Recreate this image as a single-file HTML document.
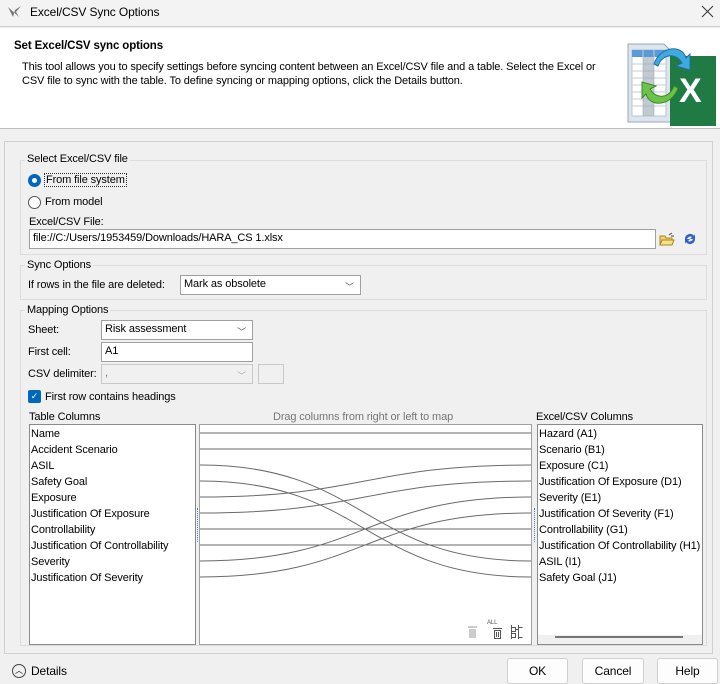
<!DOCTYPE html>
<html><head><style>
*{box-sizing:border-box;margin:0;padding:0}
body{width:720px;height:684px;background:#f0f0f0;font-family:"Liberation Sans",sans-serif;font-size:11px;letter-spacing:-0.12px;color:#000;position:relative;overflow:hidden}
.a{position:absolute;white-space:nowrap}
.box{position:absolute;border:1px solid #dcdcdc}
.in{position:absolute;background:#fff;border:1px solid #a0a0a0;padding-left:3px;line-height:17px}
.chev{position:absolute;right:6px;top:3px;font-size:9px;color:#555}
.btn{position:absolute;border:1px solid #cfcfcf;background:#fdfdfd;border-radius:3px;text-align:center;line-height:25px;font-size:12px}
.list{position:absolute;background:#fff;border:1px solid #8a8a8a}
.list div{height:16px;line-height:16px;padding-left:1px;white-space:nowrap}
</style></head><body>
<!-- title bar -->
<div class="a" style="left:0;top:0;width:720px;height:27px;background:#f3f3f3;border-bottom:1px solid #cfcfcf"></div>
<svg class="a" style="left:7px;top:5px" width="16" height="14"><path d="M1 2 L6 12 L8 5 L14 1 L9 7 L12 12 Z" fill="#777"/></svg>
<div class="a" style="left:30px;top:5px;font-size:12px">Excel/CSV Sync Options</div>
<svg class="a" style="left:701px;top:5px" width="13" height="13"><path d="M1 1L12 12M12 1L1 12" stroke="#333" stroke-width="1"/></svg>
<!-- header -->
<div class="a" style="left:0;top:28px;width:720px;height:101px;background:#fff;border-bottom:1px solid #bdbdbd"></div>
<div class="a" style="left:14px;top:40px;font-weight:bold;font-size:11.5px">Set Excel/CSV sync options</div>
<div class="a" style="left:22px;top:60px;line-height:14px">This tool allows you to specify settings before syncing content between an Excel/CSV file and a table. Select the Excel or<br>CSV file to sync with the table. To define syncing or mapping options, click the Details button.</div>
<svg class="a" style="left:626px;top:36px" width="92" height="92">
<path d="M2 8 H38 L46 16 V86 H2 Z" fill="#dce4ee" stroke="#9aa7b6"/>
<rect x="6" y="14" width="34" height="66" fill="#fff" stroke="#b8c4d2"/>
<rect x="6" y="14" width="34" height="7" fill="#5a9ad6"/>
<path d="M6 28H40M6 35H40M6 42H40M6 49H40M6 56H40M6 63H40M6 70H40M17 14V80M28 14V80" stroke="#c5ced9"/>
<rect x="17" y="21" width="11" height="59" fill="#9aa6b2" opacity=".6"/>
<rect x="44" y="20" width="46" height="70" fill="#1f7a44"/>
<text x="53" y="66" font-family="Liberation Sans" font-weight="bold" font-size="34" fill="#fff">X</text>
<path d="M28 28 C34 10 56 8 60 22 L64 18 L64 34 L50 30 L56 27 C50 16 36 18 32 30 Z" fill="#3fa9e0" stroke="#1e6fa6"/>
<path d="M52 52 C46 70 24 72 20 58 L16 62 L16 46 L30 50 L24 53 C30 64 44 62 48 50 Z" fill="#6cc24a" stroke="#3a8a22"/>
</svg>
<!-- outer panel -->
<div class="box" style="left:4px;top:141px;width:709px;height:513px;border-color:#cfcfcf"></div>
<!-- group 1 -->
<div class="box" style="left:20px;top:160px;width:687px;height:95px"></div>
<div class="a" style="left:25px;top:153px;background:#f0f0f0;padding:0 2px">Select Excel/CSV file</div>
<div class="a" style="left:28px;top:174px;width:13px;height:13px;border-radius:50%;background:#0067c0"><div style="position:absolute;left:4px;top:4px;width:5px;height:5px;border-radius:50%;background:#fff"></div></div>
<div class="a" style="left:44px;top:173px;border:1px dotted #333;padding:0 1px">From file system</div>
<div class="a" style="left:28px;top:196px;width:13px;height:13px;border-radius:50%;border:1px solid #555;background:#fff"></div>
<div class="a" style="left:45px;top:196px">From model</div>
<div class="a" style="left:29px;top:216px">Excel/CSV File:</div>
<div class="in" style="left:29px;top:229px;width:627px;height:20px">file://C:/Users/1953459/Downloads/HARA_CS 1.xlsx</div>
<svg class="a" style="left:659px;top:231px" width="16" height="16"><path d="M1 5 H6 L7 7 H13 V14 H1 Z" fill="#f3d36b" stroke="#a8861a"/><path d="M3 9 H15 L13 14 H1 Z" fill="#f7e08a" stroke="#a8861a"/><path d="M10 4 L13 2 M12 5 H15" stroke="#444"/></svg>
<svg class="a" style="left:682px;top:231px" width="16" height="16"><path d="M3 8 A5 5 0 0 1 12 5 L13 3 V8 H8 L10 6 A3.5 3.5 0 0 0 5 8 Z" fill="#2f63c7"/><path d="M13 8 A5 5 0 0 1 4 11 L3 13 V8 H8 L6 10 A3.5 3.5 0 0 0 11 8 Z" fill="#2f63c7"/></svg>
<!-- group 2 -->
<div class="box" style="left:20px;top:265px;width:687px;height:35px"></div>
<div class="a" style="left:25px;top:259px;background:#f0f0f0;padding:0 2px">Sync Options</div>
<div class="a" style="left:28px;top:279px">If rows in the file are deleted:</div>
<div class="in" style="left:180px;top:275px;width:181px;height:20px">Mark as obsolete<span class="chev">﹀</span></div>
<!-- group 3 -->
<div class="box" style="left:20px;top:310px;width:687px;height:336px"></div>
<div class="a" style="left:25px;top:304px;background:#f0f0f0;padding:0 2px">Mapping Options</div>
<div class="a" style="left:28px;top:324px">Sheet:</div>
<div class="in" style="left:101px;top:320px;width:152px;height:20px">Risk assessment<span class="chev">﹀</span></div>
<div class="a" style="left:28px;top:346px">First cell:</div>
<div class="in" style="left:101px;top:342px;width:152px;height:20px">A1</div>
<div class="a" style="left:28px;top:368px">CSV delimiter:</div>
<div class="in" style="left:101px;top:364px;width:152px;height:20px;background:#f0f0f0;border-color:#c8c8c8;color:#777">,<span class="chev" style="color:#aaa">﹀</span></div>
<div class="a" style="left:258px;top:364px;width:26px;height:20px;border:1px solid #c8c8c8"></div>
<div class="a" style="left:28px;top:390px;width:13px;height:13px;border-radius:2px;background:#0067c0;color:#fff;font-size:9px;line-height:13px;text-align:center">✓</div>
<div class="a" style="left:45px;top:391px">First row contains headings</div>
<div class="a" style="left:29px;top:411px">Table Columns</div>
<div class="a" style="left:273px;top:411px;color:#777">Drag columns from right or left to map</div>
<div class="a" style="left:536px;top:411px">Excel/CSV Columns</div>
<div class="list" style="left:29px;top:424px;width:167px;height:221px;padding-top:1px">
<div>Name</div><div>Accident Scenario</div><div>ASIL</div><div>Safety Goal</div><div>Exposure</div><div>Justification Of Exposure</div><div>Controllability</div><div>Justification Of Controllability</div><div>Severity</div><div>Justification Of Severity</div></div>
<div class="list" style="left:199px;top:424px;width:333px;height:221px;border-color:#a0a0a0"></div>
<svg class="a" style="left:199px;top:424px" width="333" height="221" fill="none" stroke="#6a6a6a" stroke-width="1">
<path d="M1 9H332M1 25H332M1 105H332M1 121H332"/>
<path d="M1 41 C166 41 166 137 332 137"/>
<path d="M1 57 C166 57 166 153 332 153"/>
<path d="M1 73 C166 73 166 41 332 41"/>
<path d="M1 89 C166 89 166 57 332 57"/>
<path d="M1 137 C166 137 166 73 332 73"/>
<path d="M1 153 C166 153 166 89 332 89"/>
<g fill="#ccc" stroke="none"><rect x="270" y="205" width="7" height="9"/><rect x="269" y="202" width="9" height="2"/></g>
<g stroke="#555"><path d="M295.5 206.5h6v8h-6zM294 204.5h9M297.5 208v5M299.5 208v5"/></g>
<text x="288" y="200" font-size="6" fill="#555" stroke="none" font-family="Liberation Sans">ALL</text>
<g stroke="#555"><path d="M312.5 201v14M312.5 203.5h4v4h-4M312.5 209.5h4v4h-4M316.5 205.5h3M319.5 201v14M319.5 203.5h4M319.5 213.5h4"/></g>
</svg>
<div class="a" style="left:197px;top:508px;height:34px;border-left:1px dotted #4a7fd0"></div>
<div class="a" style="left:534px;top:508px;height:34px;border-left:1px dotted #4a7fd0"></div>
<div class="list" style="left:537px;top:424px;width:166px;height:221px;padding-top:1px;overflow:hidden">
<div>Hazard (A1)</div><div>Scenario  (B1)</div><div>Exposure (C1)</div><div>Justification Of Exposure (D1)</div><div>Severity (E1)</div><div>Justification Of Severity (F1)</div><div>Controllability (G1)</div><div>Justification Of Controllability (H1)</div><div>ASIL (I1)</div><div>Safety Goal (J1)</div>
<div style="position:absolute;left:0;top:210px;width:164px;height:10px;background:#f0f0f0"></div>
<div style="position:absolute;left:17px;top:211px;width:128px;height:2px;background:#777"></div>
</div>
<!-- bottom -->
<div class="a" style="left:12px;top:664px;width:14px;height:14px;border:1px solid #444;border-radius:50%;font-size:8px;line-height:12px;text-align:center">︿</div>
<div class="a" style="left:31px;top:664px;font-size:12px">Details</div>
<div class="btn" style="left:507px;top:658px;width:61px;height:26px">OK</div>
<div class="btn" style="left:582px;top:658px;width:62px;height:26px">Cancel</div>
<div class="btn" style="left:657px;top:658px;width:61px;height:26px">Help</div>
</body></html>
